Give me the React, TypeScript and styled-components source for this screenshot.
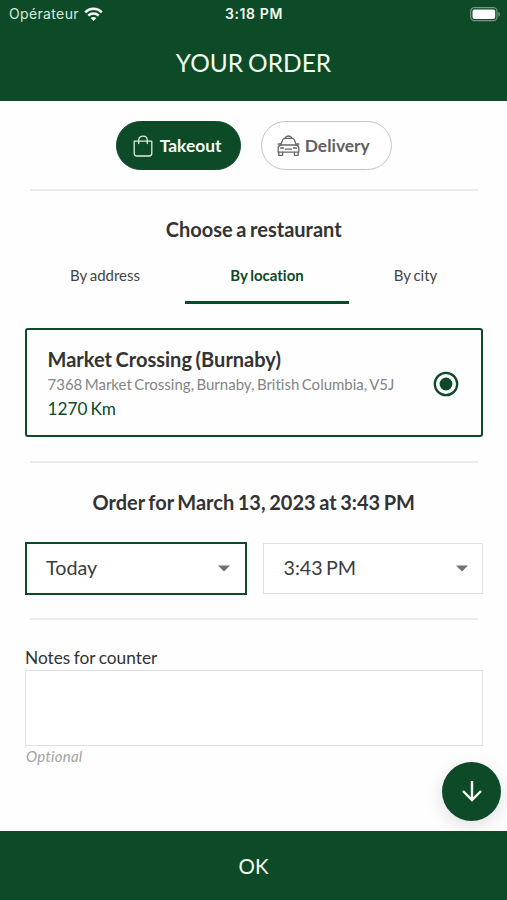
import React from "react";
import styled, { createGlobalStyle } from "styled-components";

const green = "#0d4a27";

const GlobalStyle = createGlobalStyle`
  * { box-sizing: border-box; }
  body {
    margin: 0;
    background: #fff;
    font-family: Lato, "Liberation Sans", sans-serif;
    font-variant-ligatures: none;
    color: #333;
  }
  button, textarea { font-family: inherit; font-variant-ligatures: none; }
`;

const Screen = styled.div`
  width: 507px;
  height: 900px;
  display: flex;
  flex-direction: column;
  position: relative;
  overflow: hidden;
  background: #fefefe;
`;

const Header = styled.header`
  height: 101px;
  flex: none;
  background: ${green};
  color: #f3fbf0;
`;

const StatusBar = styled.div`
  height: 27px;
  padding: 0 6px 0 9px;
  display: grid;
  grid-template-columns: 1fr auto 1fr;
  align-items: center;
  font-family: Inter, Roboto, sans-serif;
  font-size: 14px;
  line-height: 28px;
`;

const Carrier = styled.div`
  display: flex;
  align-items: center;
  gap: 5px;
  letter-spacing: 0.35px;
  color: #d7eadb;
`;

const Clock = styled.div`
  font-weight: 600;
  letter-spacing: 0.6px;
  transform: translateX(-1px);
`;

const Battery = styled.svg`
  justify-self: end;
`;

const Title = styled.h1`
  margin: 0;
  height: 72px;
  line-height: 72px;
  text-align: center;
  font-size: 24.5px;
  font-weight: 400;
  word-spacing: -1.4px;
`;

const Content = styled.main`
  flex: 1;
  min-height: 0;
  padding: 20px 24.5px 0 25px;
`;

const Modes = styled.div`
  display: flex;
  justify-content: center;
  gap: 20px;
  height: 49px;
`;

const Pill = styled.button<{ $active?: boolean; $width: number }>`
  width: ${(p) => p.$width}px;
  height: 49px;
  padding: 0 0 0 ${(p) => (p.$active ? 16 : 15)}px;
  display: flex;
  align-items: center;
  gap: ${(p) => (p.$active ? 7 : 5)}px;
  border-radius: 25px;
  border: 1px solid ${(p) => (p.$active ? green : "#c4c4c4")};
  background: ${(p) => (p.$active ? green : "#fff")};
  color: ${(p) => (p.$active ? "#f5fbf3" : "#606060")};
  font-size: 17.4px;
  font-weight: 700;
`;

const Divider = styled.hr<{ $top: number }>`
  height: 2px;
  border: 0;
  background: #ececec;
  margin: ${(p) => p.$top}px 5px 0;
`;

const Heading = styled.h2<{ $top: number }>`
  margin: ${(p) => p.$top}px 0 0;
  height: 24px;
  line-height: 24px;
  font-size: 20px;
  font-weight: 700;
  text-align: center;
  word-spacing: -1.3px;
`;

const Tabs = styled.div`
  display: grid;
  grid-template-columns: 160px 164px 133px;
  margin-top: 13px;
`;

const Tab = styled.button<{ $active?: boolean }>`
  height: 50px;
  padding: 0 0 6px;
  border: 0;
  border-bottom: 3px solid ${(p) => (p.$active ? green : "transparent")};
  background: none;
  color: ${(p) => (p.$active ? green : "#444")};
  font-size: 15px;
  font-weight: ${(p) => (p.$active ? 700 : 400)};
  word-spacing: -1px;
`;

const Card = styled.section`
  display: flex;
  align-items: center;
  justify-content: space-between;
  height: 109px;
  margin-top: 24px;
  padding: 2px 22px 0 20.5px;
  border: 2px solid ${green};
  border-radius: 3px;
`;

const Store = styled.div`
  display: flex;
  flex-direction: column;
`;

const StoreName = styled.div`
  font-size: 20px;
  line-height: 26px;
  font-weight: 700;
  word-spacing: -1.2px;
`;

const Address = styled.div`
  font-size: 15px;
  line-height: 24px;
  color: #858585;
  word-spacing: -1.4px;
`;

const Distance = styled.div`
  font-size: 17.2px;
  line-height: 26px;
  color: ${green};
  word-spacing: -1.3px;
`;

const Selects = styled.div`
  display: grid;
  grid-template-columns: 222px 219.5px;
  justify-content: space-between;
  align-items: center;
  height: 53px;
  margin-top: 28px;
`;

const Select = styled.button<{ $active?: boolean }>`
  display: flex;
  align-items: center;
  justify-content: space-between;
  height: ${(p) => (p.$active ? 53 : 51)}px;
  padding: 0 ${(p) => (p.$active ? 15 : 14)}px 0 ${(p) => (p.$active ? 19 : 19.5)}px;
  border: ${(p) => (p.$active ? `2px solid ${green}` : "1px solid #e0e0e0")};
  background: #fff;
  color: #3c3c3c;
  font-size: 19.7px;
  word-spacing: -1.8px;
`;

const SelectValue = styled.span`
  padding-bottom: 2px;
`;

const Label = styled.label`
  display: block;
  margin-top: 26px;
  height: 24px;
  line-height: 24px;
  font-size: 17.3px;
  word-spacing: -1px;
`;

const Notes = styled.textarea`
  display: block;
  width: 100%;
  height: 76px;
  border: 1px solid #e2e2e2;
  background: #fff;
  resize: none;
`;

const Hint = styled.div`
  padding-left: 1px;
  line-height: 21px;
  font-size: 15px;
  font-style: italic;
  letter-spacing: 0.25px;
  color: #a2a2a2;
`;

const ScrollButton = styled.button`
  position: absolute;
  right: 6px;
  bottom: 79.5px;
  width: 59px;
  height: 59px;
  padding: 0;
  display: grid;
  place-items: center;
  border: 0;
  border-radius: 50%;
  background: ${green};
  box-shadow: 0 5px 18px rgba(0, 0, 0, 0.12);
`;

const Confirm = styled.button`
  position: relative;
  flex: none;
  height: 69px;
  padding: 0;
  border: 0;
  background: ${green};
  color: #f3fbf0;
  font-size: 20.5px;
`;

const Wifi = () => (
  <svg width="19" height="15" viewBox="0 0 19 15" fill="none" stroke="#f4fbf2" strokeWidth="2.5">
    <path d="M1.2 5.3C5.8.7 13.2.7 17.8 5.3" />
    <path d="M4.2 8.6C7.2 5.8 11.8 5.8 14.8 8.6" />
    <path d="M6.6 11.1Q9.5 8.7 12.4 11.1L9.5 14Z" fill="#f4fbf2" stroke="none" />
  </svg>
);

const Bag = () => (
  <svg width="20" height="22" viewBox="0 0 20 22" fill="none" stroke="#d9eedb" strokeWidth="1.3" strokeLinecap="round">
    <path d="M1.2 6.2H18.8V18.2Q18.8 21 16 21H4Q1.2 21 1.2 18.2Z" strokeLinejoin="round" />
    <path d="M5.7 8.5V5.2C5.7-.3 14.3-.3 14.3 5.2V8.5" />
  </svg>
);

const Taxi = () => (
  <svg width="23" height="22" viewBox="0 0 23 22" fill="none" stroke="#686868" strokeWidth="1.3" strokeLinejoin="round" strokeLinecap="round">
    <path d="M8 3.2Q8.8 1 11.5 1Q14.2 1 15 3.2" />
    <path d="M3.7 10L5.7 4.8Q6.3 3.3 7.8 3.3H15.2Q16.7 3.3 17.3 4.8L19.3 10Z" />
    <path d="M3.7 10Q1.2 10.7 1.2 13V17.2H21.8V13Q21.8 10.7 19.3 10" />
    <path d="M1.8 17.2V20.4H5.6V17.2M17.4 17.2V20.4H21.2V17.2M1.2 9H3.5M19.5 9H21.8" />
    <path d="M3.5 13H6.6M16.4 13H19.5M8.4 14.2H14.6" />
  </svg>
);

const Caret = () => (
  <svg width="12" height="7" viewBox="0 0 12 7">
    <path d="M0 .5H12L6 6.5Z" fill="#707070" />
  </svg>
);

const Radio = () => (
  <svg width="26" height="26" viewBox="0 0 26 26">
    <circle cx="13" cy="13" r="11.2" fill="#fff" stroke={green} strokeWidth="2.3" />
    <circle cx="13" cy="13" r="6.4" fill={green} />
  </svg>
);

export default function App() {
  return (
    <>
      <GlobalStyle />
      <Screen>
        <Header>
          <StatusBar>
            <Carrier>Opérateur <Wifi /></Carrier>
            <Clock>3:18 PM</Clock>
            <Battery width="31" height="15" viewBox="0 0 31 15">
              <rect x=".7" y=".7" width="26.3" height="13" rx="3.6" fill="none" stroke="#739980" strokeWidth="1.2" />
              <rect x="2.5" y="2.4" width="22.7" height="9.6" rx="2" fill="#fff" />
              <path d="M28.3 5V9.5Q30 8.9 30 7.2T28.3 5Z" fill="#739980" />
            </Battery>
          </StatusBar>
          <Title>YOUR ORDER</Title>
        </Header>
        <Content>
          <Modes>
            <Pill $active $width={125}><Bag />Takeout</Pill>
            <Pill $width={131}><Taxi />Delivery</Pill>
          </Modes>
          <Divider $top={19} />
          <Heading $top={26}>Choose a restaurant</Heading>
          <Tabs>
            <Tab>By address</Tab>
            <Tab $active>By location</Tab>
            <Tab>By city</Tab>
          </Tabs>
          <Card>
            <Store>
              <StoreName>Market Crossing (Burnaby)</StoreName>
              <Address>7368 Market Crossing, Burnaby, British Columbia, V5J</Address>
              <Distance>1270 Km</Distance>
            </Store>
            <Radio />
          </Card>
          <Divider $top={24} />
          <Heading $top={27}>Order for March 13, 2023 at 3:43 PM</Heading>
          <Selects>
            <Select $active><SelectValue>Today</SelectValue><Caret /></Select>
            <Select><SelectValue>3:43 PM</SelectValue><Caret /></Select>
          </Selects>
          <Divider $top={23} />
          <Label htmlFor="notes">Notes for counter</Label>
          <Notes id="notes" />
          <Hint>Optional</Hint>
        </Content>
        <Confirm>OK</Confirm>
        <ScrollButton aria-label="Scroll down">
          <svg width="22" height="22" viewBox="0 0 22 22" fill="none" stroke="#f5fbf3" strokeWidth="2.4">
            <path d="M11 1V20M2 11L11 20L20 11" />
          </svg>
        </ScrollButton>
      </Screen>
    </>
  );
}
